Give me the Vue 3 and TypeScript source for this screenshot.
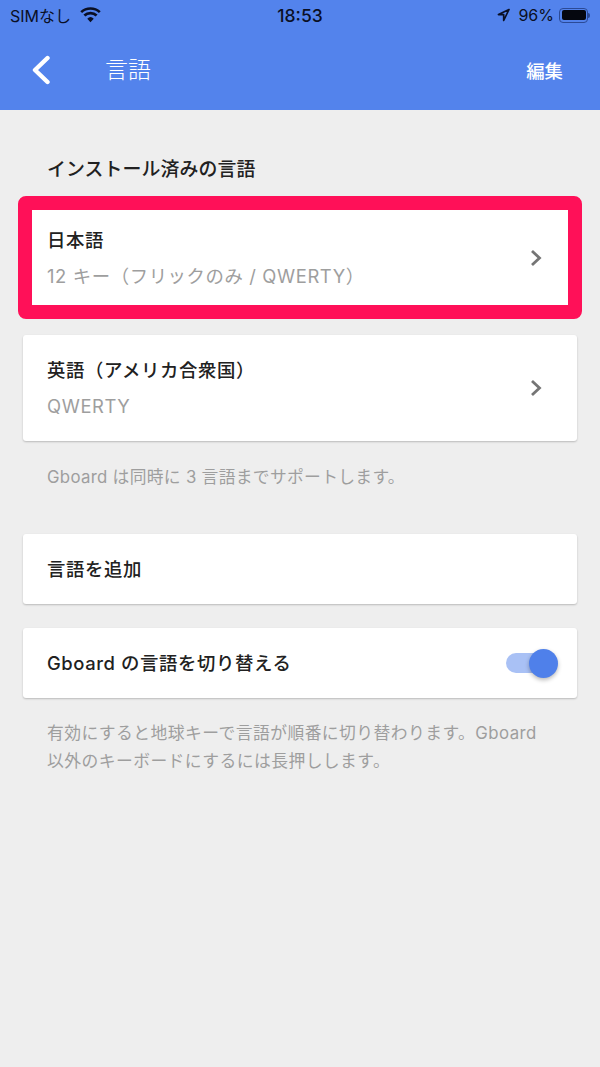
<template>
  <div class="page">
    <header class="app-header">
      <div class="status-bar">
        <div class="status-left">
          <span>SIMなし</span>
          <svg class="wifi" width="21" height="16" viewBox="0 0 22 16">
            <path d="M11 15.5 7.6 11.8a5 5 0 0 1 6.8 0z" fill="#0a0f24" />
            <path d="M5.6 9.7 3.6 7.6a10.8 10.8 0 0 1 14.8 0l-2 2.1a8 8 0 0 0-10.8 0z" fill="#0a0f24" />
            <path d="M2.2 6 .3 4a15.6 15.6 0 0 1 21.4 0l-1.9 2A12.9 12.9 0 0 0 2.2 6z" fill="#0a0f24" />
          </svg>
        </div>
        <span class="clock">18:53</span>
        <div class="status-right">
          <svg class="arrow" width="13" height="14" viewBox="0 0 13 14">
            <path d="M12 1.5 1.5 6.6h5.2V12.5z" fill="none" stroke="#0a0f24" stroke-width="1.7" stroke-linejoin="round" />
          </svg>
          <span>96%</span>
          <div class="battery"><div class="battery-fill"></div></div>
          <div class="battery-tip"></div>
        </div>
      </div>
      <div class="nav-bar">
        <svg class="back" width="20" height="30" viewBox="0 0 20 30">
          <path d="M16.5 3 4 15l12.5 12" fill="none" stroke="#fff" stroke-width="4.4" stroke-linecap="round" stroke-linejoin="round" />
        </svg>
        <span class="nav-title">言語</span>
        <span class="nav-action">編集</span>
      </div>
    </header>

    <main class="content">
      <h2 class="section-title">インストール済みの言語</h2>

      <div class="card-list">
        <div v-for="lang in languages" :key="lang.name" class="card lang-card" :class="{ highlighted: lang.highlighted }">
          <div class="lang-text">
            <div class="card-title">{{ lang.name }}</div>
            <div class="card-sub">{{ lang.layout }}</div>
          </div>
          <svg class="chevron" width="14" height="18" viewBox="0 0 14 18">
            <path d="M3 2l7.5 7L3 16" fill="none" stroke="#757575" stroke-width="2.8" />
          </svg>
        </div>
      </div>

      <p class="note first-note">Gboard は同時に 3 言語までサポートします。</p>

      <div class="card row-card add-card">
        <div class="card-title">言語を追加</div>
      </div>

      <div class="card row-card switch-card">
        <div class="card-title">Gboard の言語を切り替える</div>
        <div class="toggle"><div class="toggle-knob"></div></div>
      </div>

      <p class="note second-note">有効にすると地球キーで言語が順番に切り替わります。Gboard<br />以外のキーボードにするには長押しします。</p>
    </main>
  </div>
</template>

<script setup lang="ts">
interface Language {
  name: string;
  layout: string;
  highlighted?: boolean;
}

const languages: Language[] = [
  { name: '日本語', layout: '12 キー（フリックのみ / QWERTY）', highlighted: true },
  { name: '英語（アメリカ合衆国）', layout: 'QWERTY' },
];
</script>

<style>
html,
body {
  margin: 0;
  background: #eeeeee;
}
</style>

<style scoped>
.page {
  min-height: 1067px;
  background: #eeeeee;
  font-family: Inter, 'Noto Sans CJK JP', sans-serif;
  color: #212121;
}

.app-header {
  height: 110px;
  background: #5383ec;
}

.status-bar {
  height: 30px;
  padding: 0 10px;
  display: grid;
  grid-template-columns: 1fr auto 1fr;
  align-items: center;
  font-size: 16px;
  color: #0a0f24;
}

.status-left {
  display: flex;
  align-items: center;
  gap: 9px;
}

.wifi {
  margin-top: 0;
}

.clock {
  font-size: 17.5px;
  font-weight: 500;
}

.status-right {
  display: flex;
  align-items: center;
  justify-content: flex-end;
  gap: 5px;
}

.arrow {
  margin-right: 3px;
}

.battery {
  width: 29px;
  height: 15px;
  box-sizing: border-box;
  border: 1.5px solid #2b4a96;
  border-radius: 4px;
  padding: 1.5px;
}

.battery-fill {
  height: 100%;
  background: #05070f;
  border-radius: 2px;
}

.battery-tip {
  width: 2px;
  height: 5px;
  margin-left: -5px;
  background: #2b4a96;
  border-radius: 0 2px 2px 0;
}

.nav-bar {
  height: 80px;
  padding: 0 37px 0 31px;
  display: flex;
  align-items: center;
  color: #ffffff;
}

.back {
  flex: none;
}

.nav-title {
  margin: -4px 0 0 54px;
  font-size: 23px;
  font-weight: 300;
  flex: 1;
}

.nav-action {
  font-size: 18.4px;
  font-weight: 500;
}

.content {
  padding: 0 23px;
}

.section-title {
  margin: 0 0 22px;
  padding: 47px 24px 0;
  height: 26px;
  line-height: 26px;
  font-size: 18.9px;
  font-weight: 500;
  letter-spacing: 0.1px;
  white-space: nowrap;
  box-sizing: content-box;
}

.card-list {
  display: flex;
  flex-direction: column;
  gap: 24px;
}

.card {
  position: relative;
  background: #ffffff;
  border-radius: 3px;
  box-shadow: 0 1px 2px rgba(0, 0, 0, 0.22);
  box-sizing: border-box;
  padding: 0 19px 0 24px;
  display: flex;
  align-items: center;
  justify-content: space-between;
}

.lang-card {
  height: 106px;
}

.highlighted::after {
  content: '';
  position: absolute;
  inset: -9px -5px -8px;
  border: 14px solid #ff1058;
  border-radius: 8px;
}

.card-title {
  font-size: 18.4px;
  font-weight: 500;
  line-height: 26px;
  white-space: nowrap;
  letter-spacing: 0.6px;
}

.card-sub {
  margin-top: 10px;
  font-size: 18.4px;
  line-height: 26px;
  letter-spacing: 0.6px;
  color: #9e9e9e;
  white-space: nowrap;
}

.chevron {
  margin-right: 15px;
}

.note {
  margin: 0;
  padding: 0 24px;
  font-size: 16.8px;
  line-height: 28px;
  letter-spacing: 0.45px;
  color: #9e9e9e;
  white-space: nowrap;
}

.first-note {
  margin-top: 22px;
  letter-spacing: 0.3px;
}

.row-card {
  height: 70px;
}

.add-card {
  margin-top: 43px;
}

.switch-card {
  margin-top: 24px;
}

.toggle {
  position: relative;
  width: 42px;
  height: 20px;
  margin-right: 10px;
  border-radius: 10px;
  background: #a9c1f5;
}

.toggle-knob {
  position: absolute;
  top: -4px;
  right: -10px;
  width: 29px;
  height: 29px;
  border-radius: 50%;
  background: #4f80ea;
  box-shadow: 0 2px 4px rgba(0, 0, 0, 0.28);
}

.second-note {
  margin-top: 21px;
  line-height: 28px;
}
</style>
